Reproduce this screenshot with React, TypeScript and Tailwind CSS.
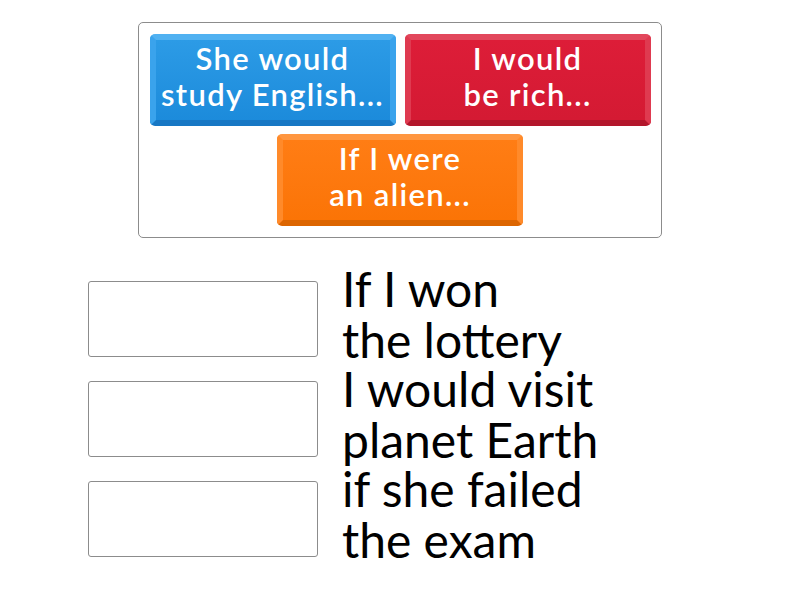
const tiles = [
  {
    text: ['She would', 'study English...'],
    cls: 'bg-gradient-to-b from-[#2c9be6] to-[#1c8bdb] border-t-[#50b1f1] border-x-[#3aa3ec] border-b-[#1777c4]',
  },
  {
    text: ['I would', 'be rich...'],
    cls: 'bg-gradient-to-b from-[#dd1d38] to-[#d41a33] border-t-[#e2475c] border-x-[#df3a50] border-b-[#b3162b]',
  },
];

const orange = {
  text: ['If I were', 'an alien...'],
  cls: 'bg-gradient-to-b from-[#ff7d14] to-[#fb7406] border-t-[#ff9640] border-x-[#ff8a2a] border-b-[#dc6500]',
};

const items = [
  ['If I won', 'the lottery'],
  ['I would visit', 'planet Earth'],
  ['if she failed', 'the exam'],
];

const Tile = ({ text, cls }: { text: string[]; cls: string }) => (
  <div
    className={`w-[246px] h-[92px] rounded-[5px] border-[6px] pb-[8px] flex flex-col items-center justify-center text-white text-[31px] leading-[36px] font-semibold tracking-[1.3px] whitespace-nowrap ${cls}`}
  >
    {text.map((t) => (
      <span key={t}>{t}</span>
    ))}
  </div>
);

export default function App() {
  return (
    <div className="w-[800px] h-[600px] bg-white font-['Lato',sans-serif] relative">
      <div className="pt-[22px] flex justify-center">
        <div className="w-[524px] h-[216px] border border-[#8c8c8c] rounded-[5px] px-[10px] pt-[11px] flex flex-col items-center gap-[8px]">
          <div className="flex gap-[9px]">
            {tiles.map((t) => (
              <Tile key={t.text[0]} {...t} />
            ))}
          </div>
          <Tile {...orange} />
        </div>
      </div>

      <div className="mt-[31px] pl-[88px] flex flex-col">
        {items.map((it) => (
          <div key={it[0]} className="h-[100px] flex items-center">
            <div className="w-[230px] h-[76px] border border-[#8c8c8c] rounded-[3px]" />
            <div className="ml-[24px] pb-[10px] text-black text-[48px] leading-[51px] whitespace-nowrap">
              {it.map((l) => (
                <div key={l}>{l}</div>
              ))}
            </div>
          </div>
        ))}
      </div>
    </div>
  );
}
